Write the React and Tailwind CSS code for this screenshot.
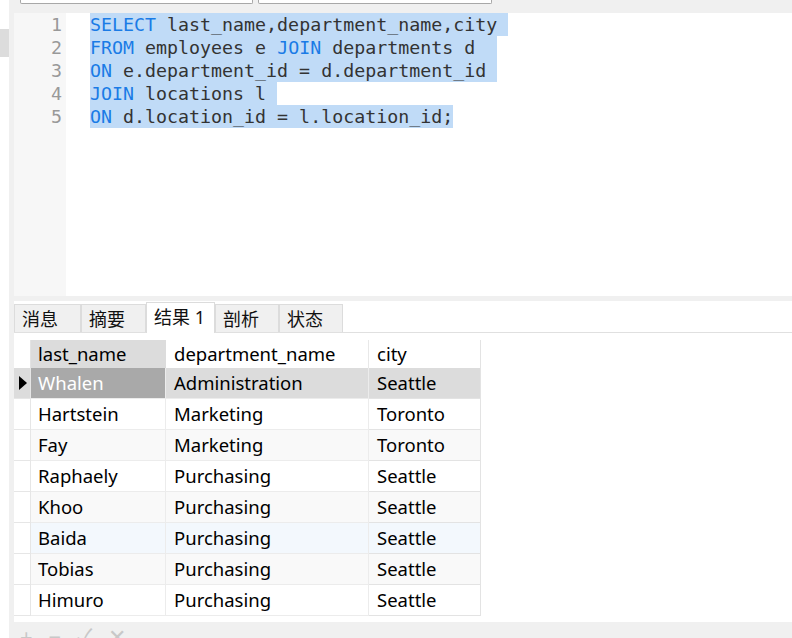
const sqlLines = [
    { w: 'w-[418px]', parts: [['k', 'SELECT'], ['t', ' last_name,department_name,city']] },
    { w: 'w-[407px]', parts: [['k', 'FROM'], ['t', ' employees e '], ['k', 'JOIN'], ['t', ' departments d']] },
    { w: 'w-[407px]', parts: [['k', 'ON'], ['t', ' e.department_id = d.department_id']] },
    { w: 'w-[187px]', parts: [['k', 'JOIN'], ['t', ' locations l']] },
    { w: 'w-[363px]', parts: [['k', 'ON'], ['t', ' d.location_id = l.location_id;']] },
];

const tabs = ['消息', '摘要', '结果 1', '剖析', '状态'];

const rows = [
    ['Whalen', 'Administration', 'Seattle'],
    ['Hartstein', 'Marketing', 'Toronto'],
    ['Fay', 'Marketing', 'Toronto'],
    ['Raphaely', 'Purchasing', 'Seattle'],
    ['Khoo', 'Purchasing', 'Seattle'],
    ['Baida', 'Purchasing', 'Seattle'],
    ['Tobias', 'Purchasing', 'Seattle'],
    ['Himuro', 'Purchasing', 'Seattle'],
];

const rowBg = (i) => {
    if (i === 0) return 'bg-[#dcdcdc]';
    if (i === 5) return 'bg-[#f3f8fd]';
    return i % 2 === 0 ? 'bg-[#f9f9f9]' : 'bg-white';
};

const mono = { fontFamily: '"DejaVu Sans Mono", monospace' };
const sans = { fontFamily: '"Noto Sans", "Noto Sans CJK SC", sans-serif' };

const App = () => {
    return (
        <div className="w-[792px] h-[638px] flex overflow-hidden bg-white">
            {/* left strip */}
            <div className="w-[9px] shrink-0 bg-white">
                <div className="mt-[29px] h-[28px] bg-[#dcdcdc]" />
            </div>

            <div className="flex-1 flex flex-col bg-[#f0f0f0] pl-[5px]">
                {/* top bar with clipped inputs */}
                <div className="h-[13px] shrink-0 -ml-[5px] flex gap-[5px] pl-[11px]">
                    <div className="w-[233px] h-[4px] bg-white border border-t-0 border-[#a8a8a8] rounded-b-[2px]" />
                    <div className="w-[234px] h-[4px] bg-white border border-t-0 border-[#a8a8a8] rounded-b-[2px]" />
                </div>

                {/* editor */}
                <div className="h-[283px] shrink-0 flex bg-white">
                    <div className="w-[52px] bg-[#f7f7f7] text-right pr-[4px] text-[#999999] text-[18.3px] leading-[23px]" style={mono}>
                        {sqlLines.map((_, i) => <div key={i}>{i + 1}</div>)}
                    </div>
                    <div className="pl-[24px] text-[18.3px] leading-[23px]" style={mono}>
                        {sqlLines.map((line, i) => (
                            <div key={i}>
                                <span className={`bg-[#c0dbf7] whitespace-pre inline-block ${line.w}`}>
                                    {line.parts.map(([kind, text], j) => (
                                        <span key={j} className={kind === 'k' ? 'text-[#1a7be6]' : 'text-[#333333]'}>{text}</span>
                                    ))}
                                </span>
                            </div>
                        ))}
                    </div>
                </div>

                <div className="h-[5px] shrink-0" />

                {/* results panel */}
                <div className="h-[321px] shrink-0 bg-white flex flex-col">
                    <div className="h-[32px] shrink-0 flex items-end border-b border-[#e0e0e0]" style={sans}>
                        {tabs.map((t, i) => (
                            <div
                                key={t}
                                className={
                                    i === 2
                                        ? 'w-[69px] h-[31px] -mb-px bg-white border border-b-0 border-[#dcdcdc] pl-[7px] text-[18px] leading-[28px] text-[#111]'
                                        : 'h-[28px] bg-[#f0f0f0] border border-b-0 border-[#dcdcdc] pl-[7px] text-[18px] leading-[28px] text-[#111] ' + (i === 0 ? 'w-[67px]' : i === 1 ? 'w-[65px]' : 'w-[64px]')
                                }
                            >
                                {t}
                            </div>
                        ))}
                    </div>

                    <div className="pt-[7px]" style={sans}>
                        <div className="grid grid-cols-[17px_135px_203px_112px] text-[18.5px] text-black">
                            <div className="h-[28px] bg-white border-r border-[#e3e3e3]" />
                            <div className="h-[28px] bg-[#dcdcdc] pl-[7px] leading-[28px]">last_name</div>
                            <div className="h-[28px] bg-white pl-[8px] leading-[28px] border-r border-[#e8e8e8]">department_name</div>
                            <div className="h-[28px] bg-white pl-[8px] leading-[28px] border-r border-[#e3e3e3]">city</div>
                            {rows.map((r, i) => (
                                <div key={r[0]} className="contents">
                                    <div className={`h-[31px] border-b border-r border-[#e6e6e6] flex items-center pl-[4px] ${i === 0 ? 'bg-[#dcdcdc]' : 'bg-white'}`}>
                                        {i === 0 && (
                                            <svg width="10" height="14" viewBox="0 0 10 14"><path d="M1 0 L9 7 L1 14 Z" fill="#000" /></svg>
                                        )}
                                    </div>
                                    <div className={`h-[31px] border-b border-r border-[#ececec] pl-[7px] leading-[30px] ${i === 0 ? 'bg-[#a9a9a9] text-white' : rowBg(i)}`}>{r[0]}</div>
                                    <div className={`h-[31px] border-b border-r border-[#ececec] pl-[8px] leading-[30px] ${rowBg(i)}`}>{r[1]}</div>
                                    <div className={`h-[31px] border-b border-r border-[#e3e3e3] pl-[8px] leading-[30px] ${rowBg(i)}`}>{r[2]}</div>
                                </div>
                            ))}
                        </div>
                    </div>
                </div>

                {/* bottom toolbar, clipped by the window edge */}
                <div className="h-[16px] shrink-0 overflow-hidden flex items-start gap-[16px] pl-[6px] pt-[3px] text-[#c8c8c8] text-[22px] leading-[22px]" style={sans}>
                    <span>+</span>
                    <span>−</span>
                    <span>✓</span>
                    <span>✕</span>
                </div>
            </div>
        </div>
    );
};

export default App;
